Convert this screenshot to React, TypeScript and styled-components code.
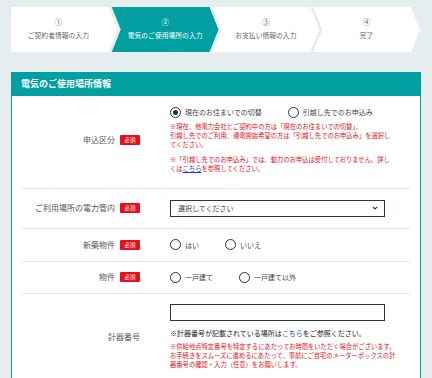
import React from "react";
import styled, { createGlobalStyle, css } from "styled-components";

const TEAL = "#00a0a2";
const RED = "#e60f1a";

const GlobalStyle = createGlobalStyle`
  html, body {
    margin: 0;
    padding: 0;
    background: #e6edee;
    font-family: "Noto Sans CJK JP", "Noto Sans", sans-serif;
    color: #333;
  }
`;

const Page = styled.div`
  padding: 7px 11px 0 11px;
  width: 432px;
  box-sizing: border-box;
`;

const Steps = styled.ol`
  display: flex;
  margin: 0;
  padding: 0;
  list-style: none;
  height: 45px;
`;

const Step = styled.li<{ $active?: boolean; $first?: boolean }>`
  flex: 0 0 106.75px;
  box-sizing: border-box;
  margin-left: ${(p) => (p.$first ? "0" : "-6px")};
  background: ${(p) => (p.$active ? TEAL : "#fff")};
  color: ${(p) => (p.$active ? "#fff" : "#666")};
  display: flex;
  flex-direction: column;
  align-items: center;
  justify-content: center;
  gap: 5px;
  padding: 0 ${(p) => (p.$first ? "12px" : "0")} 3px 0;
  font-size: 6.8px;
  line-height: 8px;
  white-space: nowrap;
  ${(p) =>
    p.$first
      ? css`
          clip-path: polygon(0 0, calc(100% - 9px) 0, 100% 50%, calc(100% - 9px) 100%, 0 100%);
        `
      : css`
          clip-path: polygon(0 0, calc(100% - 9px) 0, 100% 50%, calc(100% - 9px) 100%, 0 100%, 9px 50%);
        `}
`;

const StepNum = styled.span`
  font-size: 7.5px;
`;

const Card = styled.section`
  margin-top: 20px;
  background: #fff;
  border: 1px solid ${TEAL};
  border-top: none;
  border-bottom: none;
`;

const CardHead = styled.h2`
  margin: 0;
  height: 24px;
  background: ${TEAL};
  color: #fff;
  font-size: 9px;
  font-weight: 700;
  line-height: 24px;
  padding-left: 9px;
`;

const Row = styled.div<{ $pad?: string }>`
  display: grid;
  grid-template-columns: 118px 1fr;
  column-gap: 30px;
  align-items: center;
  margin: 0 10px;
  padding: ${(p) => p.$pad ?? "11px 0"};
  border-top: 1px solid #e1e9e9;
  &:first-of-type {
    border-top: none;
  }
`;

const Label = styled.div`
  display: flex;
  justify-content: flex-end;
  align-items: center;
  gap: 5px;
  height: 12px;
  font-size: 8px;
  line-height: 12px;
  color: #555;
`;

const Badge = styled.span`
  width: 20px;
  height: 10px;
  border-radius: 1px;
  background: ${RED};
  color: #fff;
  font-size: 5.5px;
  line-height: 10px;
  text-align: center;
`;

const RadioGroup = styled.div`
  display: flex;
  gap: 26px;
  height: 12px;
  align-items: center;
`;

const RadioOption = styled.label`
  display: flex;
  align-items: center;
  gap: 4px;
  font-size: 7px;
  line-height: 12px;
  color: #444;
  white-space: nowrap;
`;

const RadioMark = styled.span<{ $checked?: boolean }>`
  width: 11px;
  height: 11px;
  box-sizing: border-box;
  border: 1.4px solid #243434;
  border-radius: 50%;
  display: flex;
  align-items: center;
  justify-content: center;
  &::after {
    content: "";
    width: 5px;
    height: 5px;
    border-radius: 50%;
    background: ${(p) => (p.$checked ? "#243434" : "transparent")};
  }
`;

const Note = styled.p<{ $color?: string; $size?: number; $lh?: number }>`
  margin: 0;
  color: ${(p) => p.$color ?? RED};
  font-size: ${(p) => p.$size ?? 6.3}px;
  line-height: ${(p) => p.$lh ?? 9.4}px;
  white-space: nowrap;
`;

const Notes = styled.div<{ $gap?: number; $top?: number }>`
  display: flex;
  flex-direction: column;
  gap: ${(p) => p.$gap ?? 5.3}px;
  margin-top: ${(p) => p.$top ?? 3.5}px;
`;

const Link = styled.a`
  color: #1a33d6;
  text-decoration: underline;
`;

const PlainLink = styled.a`
  color: #2a40e0;
  text-decoration: none;
`;

const Select = styled.div`
  width: 215px;
  height: 17px;
  box-sizing: border-box;
  border: 1px solid #1f3b3b;
  display: flex;
  align-items: center;
  justify-content: space-between;
  padding: 0 6px 0 7px;
  font-size: 7px;
  color: #444;
`;

const Input = styled.div`
  width: 215px;
  height: 17px;
  box-sizing: border-box;
  border: 1px solid #1f3b3b;
`;

const Field = styled.div`
  display: flex;
  flex-direction: column;
`;

const Chevron = () => (
  <svg width="6" height="4" viewBox="0 0 6 4">
    <path d="M0.8 0.8 L3 3 L5.2 0.8" fill="none" stroke="#333" strokeWidth="1.1" />
  </svg>
);

const Radio = ({ label, checked }: { label: string; checked?: boolean }) => (
  <RadioOption>
    <RadioMark $checked={checked} />
    {label}
  </RadioOption>
);

export default function App() {
  return (
    <Page>
      <GlobalStyle />
      <Steps>
        <Step $first>
          <StepNum>①</StepNum>
          <span>ご契約者情報の入力</span>
        </Step>
        <Step $active>
          <StepNum>②</StepNum>
          <span>電気のご使用場所の入力</span>
        </Step>
        <Step>
          <StepNum>③</StepNum>
          <span>お支払い情報の入力</span>
        </Step>
        <Step>
          <StepNum>④</StepNum>
          <span>完了</span>
        </Step>
      </Steps>

      <Card>
        <CardHead>電気のご使用場所情報</CardHead>

        <Row $pad="10px 0 14px">
          <Label>
            申込区分<Badge>必須</Badge>
          </Label>
          <Field>
            <RadioGroup>
              <Radio label="現在のお住まいでの切替" checked />
              <Radio label="引越し先でのお申込み" />
            </RadioGroup>
            <Notes>
              <Note>
                ※現在、他電力会社とご契約中の方は「現在のお住まいでの切替」、
                <br />
                引越し先でのご利用、通電開始希望の方は「引越し先でのお申込み」を選択し
                <br />
                てください。
              </Note>
              <Note>
                ※「引越し先でのお申込み」では、動力のお申込は受付しておりません。詳し
                <br />
                くは<Link href="#">こちら</Link>を参照してください。
              </Note>
            </Notes>
          </Field>
        </Row>

        <Row>
          <Label>
            ご利用場所の電力管内<Badge>必須</Badge>
          </Label>
          <Select>
            選択してください
            <Chevron />
          </Select>
        </Row>

        <Row $pad="10px 0">
          <Label>
            新築物件<Badge>必須</Badge>
          </Label>
          <RadioGroup>
            <Radio label="はい" />
            <Radio label="いいえ" />
          </RadioGroup>
        </Row>

        <Row $pad="9.5px 0">
          <Label>
            物件<Badge>必須</Badge>
          </Label>
          <RadioGroup>
            <Radio label="一戸建て" />
            <Radio label="一戸建て以外" />
          </RadioGroup>
        </Row>

        <Row $pad="10px 0">
          <Label>計器番号</Label>
          <Field>
            <Input />
            <Notes $top={7} $gap={3.8}>
              <Note $color="#222" $size={7} $lh={10}>
                ※計器番号が記載されている場所は<PlainLink href="#">こちら</PlainLink>をご参照ください。
              </Note>
              <Note>
                ※供給地点特定番号を特定するにあたってお時間をいただく場合がございます。
                <br />
                お手続きをスムーズに進めるにあたって、事前にご自宅のメーターボックスの計
                <br />
                器番号の確認・入力（任意）をお願いします。
              </Note>
            </Notes>
          </Field>
        </Row>
      </Card>
    </Page>
  );
}
